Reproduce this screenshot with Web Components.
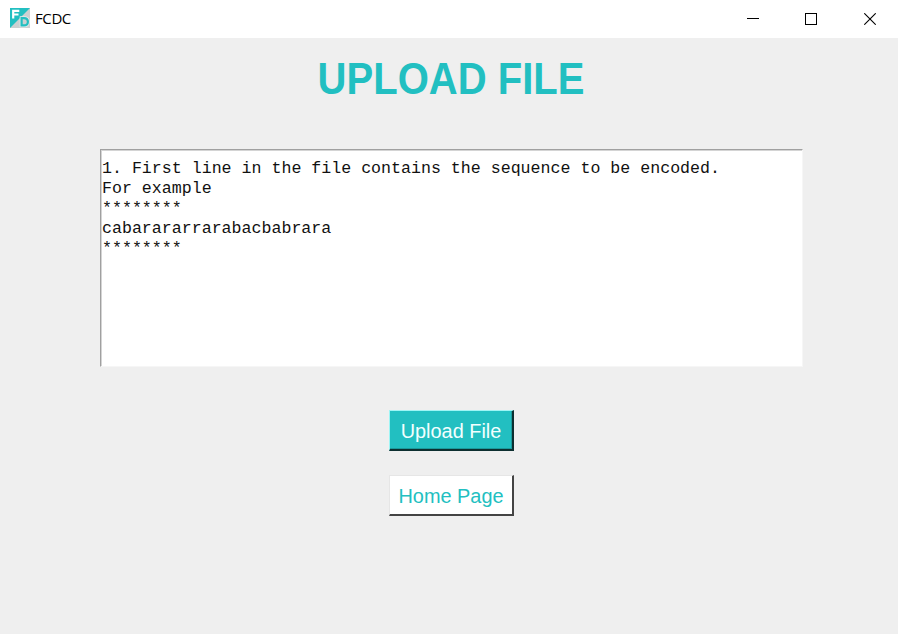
<!DOCTYPE html>
<html lang="en">
<head>
<meta charset="utf-8">
<title>FCDC</title>
<style>
html, body { margin: 0; height: 100%; overflow: hidden; background: #efefef; }
</style>
</head>
<body>
<app-window>
  <title-bar slot="bar">FCDC</title-bar>
  <page-heading>UPLOAD FILE</page-heading>
  <text-panel>1. First line in the file contains the sequence to be encoded.
For example
********
cabarararrarabacbabrara
********</text-panel>
  <raised-button class="primary">Upload File</raised-button>
  <raised-button>Home Page</raised-button>
</app-window>
<script>
function define(name, html) {
  const template = document.createElement('template');
  template.innerHTML = html;
  customElements.define(name, class extends HTMLElement {
    constructor() {
      super();
      this.attachShadow({ mode: 'open' }).append(template.content.cloneNode(true));
    }
  });
}

define('app-window', `
<style>
  :host { display: flex; flex-direction: column; height: 634px; width: 898px; background: #efefef; font-family: "Liberation Sans", Arial, sans-serif; }
  main { flex: 1; display: flex; flex-direction: column; align-items: center; padding: 16px 0 0 5px; box-sizing: border-box; }
</style>
<slot name="bar"></slot>
<main><slot></slot></main>`);

define('title-bar', `
<style>
  :host { display: flex; align-items: center; height: 38px; background: #fff; color: #000; font: 15px/20px "Open Sans", "Noto Sans", sans-serif; }
  .logo { margin: -3px 5px 0 10px; }
  .name { flex: 1; letter-spacing: -0.4px; margin-top: -2px; }
  .controls { display: flex; gap: 46px; margin-right: 22px; }
  .close { margin-left: 1px; }
  svg { display: block; }
</style>
<svg class="logo" width="20" height="20" viewBox="0 0 20 20">
  <rect width="20" height="20" fill="#cbd0d1"/>
  <path d="M0 0H20L0 20Z" fill="#22bfc1"/>
  <path d="M3.2 10.5V2.8H9.3M3.2 6.5H8.5" fill="none" stroke="#fff" stroke-width="2.2"/>
  <path d="M11.6 10.2H14Q17.9 10.2 17.9 13.8T14 17.4H11.6Z" fill="none" stroke="#e4eced" stroke-width="3.8"/>
  <path d="M11.6 10.2H14Q17.9 10.2 17.9 13.8T14 17.4H11.6Z" fill="#cbd0d1" stroke="#22bfc1" stroke-width="2.2"/>
</svg>
<span class="name"><slot></slot></span>
<div class="controls">
  <svg width="12" height="12"><path d="M0 5.5H12" stroke="#000"/></svg>
  <svg width="12" height="12"><rect x=".5" y=".5" width="11" height="11" fill="none" stroke="#000"/></svg>
  <svg class="close" width="12" height="12"><path d="M.3 .3L11.7 11.7M11.7 .3L.3 11.7" stroke="#000" stroke-width="1.1"/></svg>
</div>`);

define('page-heading', `
<style>
  :host { display: block; height: 48px; margin: 0 2px 47px 0; color: #22bfc1; font-weight: bold; font-size: 43.5px; line-height: 51px; white-space: nowrap; transform: scaleX(.92); }
</style>
<slot></slot>`);

define('text-panel', `
<style>
  :host { display: block; box-sizing: border-box; width: 703px; height: 218px; margin-bottom: 43px; padding: 9px 0 0 1px;
    background: #fff; border: 1px solid; border-color: #a0a0a0 #f6f6f6 #f6f6f6 #a0a0a0; box-shadow: inset 1px 1px #d4d4d4;
    color: #111; font: 16.63px/20px "Liberation Mono", "Courier New", monospace; }
  .lines { white-space: pre; }
</style>
<div class="lines"><slot></slot></div>`);

define('raised-button', `
<style>
  :host { display: flex; align-items: center; justify-content: center; box-sizing: border-box; width: 125px; height: 41px; margin-bottom: 24px; padding: 2px 0 0;
    background: #fff; color: #22bfc1; border: solid; border-width: 1px 2px 2px 1px; border-color: #e6e6e6 #444 #444 #e6e6e6; font-size: 19.9px; line-height: 24px; }
  :host(.primary) { background: #22bfc1; color: #f2ffff; border-color: #9ff5f5 #0d2f30 #0d2f30 #9ff5f5; box-shadow: inset -1px -1px #1a9a9c; }
</style>
<slot></slot>`);
</script>
</body>
</html>
